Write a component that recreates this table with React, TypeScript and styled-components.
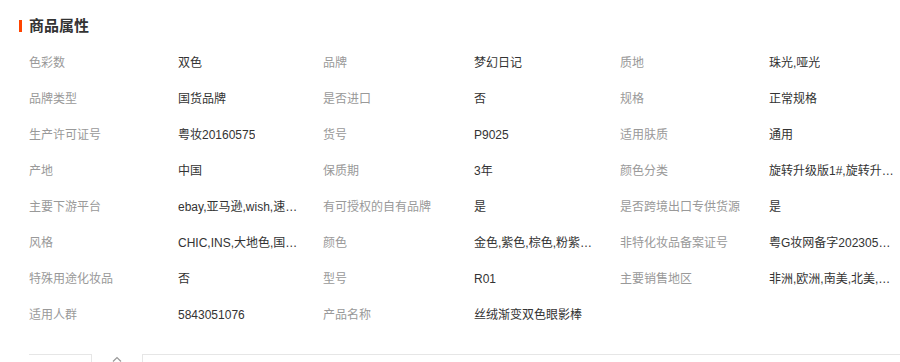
import React from "react";
import styled, { createGlobalStyle } from "styled-components";

const GlobalStyle = createGlobalStyle`
  html, body {
    margin: 0;
    padding: 0;
    background: #ffffff;
  }
  body {
    font-family: "Liberation Sans", "Noto Sans CJK SC", sans-serif;
    font-size: 12px;
    color: #333333;
  }
`;

const Page = styled.div`
  width: 900px;
  padding-top: 16px;
  overflow: hidden;
`;

const Heading = styled.div`
  display: flex;
  align-items: center;
  gap: 7px;
  height: 20px;
  padding-left: 19px;
`;

const HeadingBar = styled.span`
  display: block;
  width: 3px;
  height: 12px;
  background: #ff4400;
`;

const HeadingText = styled.h3`
  margin: 0;
  font-family: "Liberation Sans", "Noto Sans CJK SC", sans-serif;
  font-size: 15px;
  font-weight: 700;
  color: #333333;
  line-height: 20px;
`;

const Grid = styled.div`
  display: grid;
  grid-template-columns: 149px 145px 151px 146px 149px 1fr;
  grid-auto-rows: 36px;
  margin-top: 9px;
  padding-left: 29px;
`;

const Cell = styled.div<{ $label?: boolean }>`
  display: flex;
  align-items: center;
  min-width: 0;
  color: ${(p) => (p.$label ? "#999999" : "#333333")};
  font-size: 12px;
  line-height: 18px;
`;

const Text = styled.span`
  display: block;
  max-width: 125px;
  white-space: nowrap;
  overflow: hidden;
  text-overflow: ellipsis;
`;

const Footer = styled.div`
  display: flex;
  align-items: flex-start;
  margin-top: 21px;
  padding-left: 29px;
  height: 30px;
`;

const FooterTab = styled.div`
  width: 62px;
  height: 30px;
  border-top: 1px solid #e6e6e6;
  border-right: 1px solid #e6e6e6;
`;

const Toggle = styled.div`
  width: 50px;
  display: flex;
  justify-content: center;
  padding-top: 2px;
`;

const FooterPanel = styled.div`
  flex: 1;
  height: 30px;
  border-top: 1px solid #e6e6e6;
  border-left: 1px solid #e6e6e6;
`;

const rows: [string, string][][] = [
  [["色彩数", "双色"], ["品牌", "梦幻日记"], ["质地", "珠光,哑光"]],
  [["品牌类型", "国货品牌"], ["是否进口", "否"], ["规格", "正常规格"]],
  [["生产许可证号", "粤妆20160575"], ["货号", "P9025"], ["适用肤质", "通用"]],
  [["产地", "中国"], ["保质期", "3年"], ["颜色分类", "旋转升级版1#,旋转升级版2#"]],
  [["主要下游平台", "ebay,亚马逊,wish,速卖通"], ["有可授权的自有品牌", "是"], ["是否跨境出口专供货源", "是"]],
  [["风格", "CHIC,INS,大地色,国潮风,日系"], ["颜色", "金色,紫色,棕色,粉紫色,红色"], ["非特化妆品备案证号", "粤G妆网备字2023056789"]],
  [["特殊用途化妆品", "否"], ["型号", "R01"], ["主要销售地区", "非洲,欧洲,南美,北美,东南亚"]],
  [["适用人群", "5843051076"], ["产品名称", "丝绒渐变双色眼影棒"], ["", ""]],
];

export default function App() {
  return (
    <>
      <GlobalStyle />
      <Page>
        <Heading>
          <HeadingBar />
          <HeadingText>商品属性</HeadingText>
        </Heading>
        <Grid>
          {rows.map((row, ri) =>
            row.map(([label, value], ci) => (
              <React.Fragment key={`${ri}-${ci}`}>
                <Cell $label>
                  <Text title={label}>{label}</Text>
                </Cell>
                <Cell>
                  <Text title={value}>{value}</Text>
                </Cell>
              </React.Fragment>
            ))
          )}
        </Grid>
        <Footer>
          <FooterTab />
          <Toggle>
            <svg width="10" height="6" viewBox="0 0 10 6" fill="none">
              <path d="M1 5.5 L5 1.5 L9 5.5" stroke="#999999" strokeWidth="1.2" />
            </svg>
          </Toggle>
          <FooterPanel />
        </Footer>
      </Page>
    </>
  );
}
